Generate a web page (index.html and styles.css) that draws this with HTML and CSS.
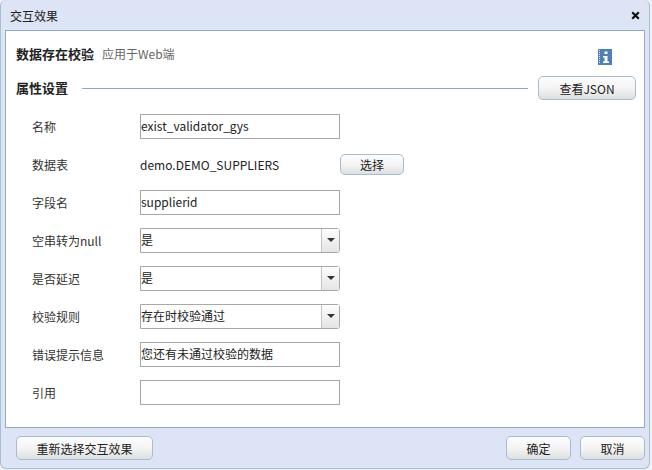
FILE: index.html
```html
<!DOCTYPE html>
<html lang="zh">
<head>
<meta charset="utf-8">
<title>交互效果</title>
<link rel="stylesheet" href="styles.css">
</head>
<body>
<div class="window">
  <header class="titlebar">
    <span class="title">交互效果</span>
    <svg class="close" width="9" height="9" viewBox="0 0 9 9"><path d="M1.2 1.2L7.8 7.8M7.8 1.2L1.2 7.8" stroke="#111" stroke-width="2.2" fill="none"/></svg>
  </header>
  <main class="panel">
    <div class="heading">
      <strong class="heading-main">数据存在校验</strong>
      <span class="heading-sub">应用于Web端</span>
      <svg class="info" width="14" height="16" viewBox="0 0 14 16">
        <rect width="14" height="16" fill="#4f7fb5"/>
        <path d="M1.5 1v14" stroke="#dfe9f4" stroke-width="1" stroke-dasharray="1 1"/>
        <rect x="6.5" y="2.5" width="3" height="2.5" fill="#fff"/>
        <path d="M5 7h4.5v5.5H11V14H5v-1.5h1.5V8.5H5z" fill="#fff"/>
      </svg>
    </div>
    <div class="section">
      <strong class="section-title">属性设置</strong>
      <span class="rule"></span>
      <button class="btn btn-json">查看JSON</button>
    </div>
    <div class="form">
      <div class="row"><label class="label">名称</label><div class="field">exist_validator_gys</div></div>
      <div class="row"><label class="label">数据表</label><span class="value">demo.DEMO_SUPPLIERS</span><button class="btn btn-pick">选择</button></div>
      <div class="row"><label class="label">字段名</label><div class="field">supplierid</div></div>
      <div class="row"><label class="label">空串转为null</label><div class="field select"><span class="select-text">是</span><span class="arrow"></span></div></div>
      <div class="row"><label class="label">是否延迟</label><div class="field select"><span class="select-text">是</span><span class="arrow"></span></div></div>
      <div class="row"><label class="label">校验规则</label><div class="field select"><span class="select-text">存在时校验通过</span><span class="arrow"></span></div></div>
      <div class="row"><label class="label">错误提示信息</label><div class="field">您还有未通过校验的数据</div></div>
      <div class="row"><label class="label">引用</label><div class="field"></div></div>
    </div>
  </main>
  <footer class="footer">
    <button class="btn btn-reselect">重新选择交互效果</button>
    <div class="footer-right">
      <button class="btn btn-small">确定</button>
      <button class="btn btn-small">取消</button>
    </div>
  </footer>
</div>
</body>
</html>
```
FILE: styles.css
```css
* { box-sizing: border-box; }
html, body { margin: 0; padding: 0; }
body {
  width: 652px;
  height: 470px;
  overflow: hidden;
  background: #f1f2f5;
  font-family: "Noto Sans CJK SC", "Liberation Sans", sans-serif;
  font-size: 12px;
  color: #222;
}
.window {
  width: 650px;
  height: 469px;
  background: #dce4f5;
  border: 1px solid #a9bdd4;
  border-top: 0;
  border-radius: 6px;
  display: flex;
  flex-direction: column;
  padding: 0 4px 0 4px;
}
.titlebar {
  height: 30px;
  flex: none;
  display: flex;
  align-items: center;
  justify-content: space-between;
  padding: 0 5px 0 5px;
}
.title { font-size: 12px; color: #222; }
.panel {
  height: 398px;
  flex: none;
  background: #fff;
  border: 1px solid #8faac6;
  padding: 0 8px 0 10px;
  display: flex;
  flex-direction: column;
}
.heading {
  height: 42px;
  flex: none;
  display: flex;
  align-items: center;
  padding-top: 2px;
}
.heading-main { font-size: 13px; font-weight: 700; color: #222; }
.heading-sub { margin-left: 8px; color: #666; }
.info { margin-left: auto; margin-right: 24px; margin-top: 8px; }
.section {
  height: 30px;
  flex: none;
  display: flex;
  align-items: center;
}
.section-title { font-size: 13px; font-weight: 700; margin-bottom: 2px; }
.rule { flex: 1; height: 1px; background: #8faac6; margin: 0 10px 0 14px; }
.btn {
  font: inherit;
  color: #222;
  border: 1px solid #a5bcd3;
  border-radius: 5px;
  background: linear-gradient(#fdfdfd, #f4f4f4 50%, #dedfe0);
  padding: 0;
}
.btn-json { width: 98px; height: 24px; }
.btn-pick { width: 64px; height: 21px; margin-left: 58px; }
.form { display: flex; flex-direction: column; margin-top: 4px; }
.row { height: 38px; flex: none; display: flex; align-items: center; padding-left: 16px; }
.label { width: 108px; flex: none; color: #333; }
.value { color: #222; width: 142px; flex: none; white-space: nowrap; }
.field {
  width: 200px;
  height: 25px;
  border: 1px solid #a8a8a8;
  background: #fff;
  padding-left: 0;
  line-height: 22px;
  color: #222;
  white-space: nowrap;
}
.select { display: flex; border-radius: 0 3px 3px 0; }
.select-text { flex: 1; }
.arrow {
  width: 18px;
  flex: none;
  border-left: 1px solid #c4c4c4;
  background: linear-gradient(#fdfdfd, #e4e4e4);
  position: relative;
}
.arrow::after {
  content: "";
  position: absolute;
  left: 5px;
  top: 9px;
  border: 4px solid transparent;
  border-top: 4px solid #333;
  border-bottom: 0;
}
.footer {
  flex: 1;
  display: flex;
  align-items: center;
  justify-content: space-between;
  padding: 0 0 0 11px;
}
.btn-reselect { width: 137px; height: 24px; }
.footer-right { display: flex; gap: 9px; }
.btn-small { width: 65px; height: 24px; }
```
